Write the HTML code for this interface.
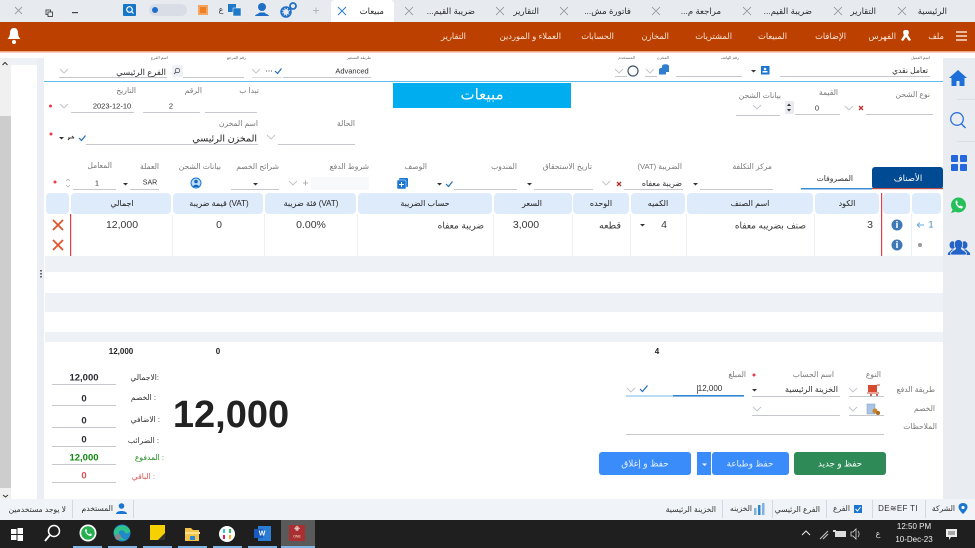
<!DOCTYPE html>
<html lang="ar"><head><meta charset="utf-8"><title>مبيعات</title>
<style>
html,body{margin:0;padding:0;width:975px;height:548px;overflow:hidden;background:#fff}
#w{position:relative;width:975px;height:548px;overflow:hidden;font-family:"Liberation Sans","DejaVu Sans",sans-serif;filter:blur(.35px)}
svg{position:absolute;left:0;top:0}
.r,.c{position:absolute;white-space:nowrap;line-height:1;font-size:8px;color:#333;z-index:2}
.r{transform:translate(-100%,-50%);direction:rtl}
.c{transform:translate(-50%,-50%)}
.tab{font-size:8.500px;color:#2b2b2b}
.m{font-size:8.300px;color:#fbe6da}
.l{font-size:7.600px;color:#777}
.h{font-size:8px;color:#222}
.tiny{font-size:4px;color:#666}
.v{font-size:9.500px;font-weight:bold;color:#2b2b33;font-family:"Liberation Sans",sans-serif}
.d{font-size:10.500px;color:#3a3a3a}
.s{font-size:7.600px;color:#2f2f2f}
.w{color:#fff}
</style></head><body><div id="w">
<svg width="975" height="548" viewBox="0 0 975 548" xmlns="http://www.w3.org/2000/svg" fill="none">
<!-- backgrounds -->
<rect width="975" height="22" fill="#e7eaef"/>
<path d="M331 22v-18a4 4 0 0 1 4-4h55a4 4 0 0 1 4 4v18z" fill="#fff"/>
<rect y="22" width="975" height="29" fill="#bc4000"/>
<rect y="51" width="975" height="1.500" fill="#f0a584"/>
<rect x="0" y="58" width="11" height="441" fill="#f0f0f0"/>
<rect x="0" y="116" width="11" height="372" fill="#cdcdcd"/>
<rect x="11" y="58" width="26" height="441" fill="#fff"/>
<rect x="11" y="58" width="26" height="7" fill="#eef1f6"/>
<rect x="37" y="58" width="7" height="441" fill="#ebeff5"/>
<rect x="943" y="58" width="32" height="441" fill="#e9edf2"/>
<rect x="44" y="81" width="899" height="1" fill="#63bdec"/>
<rect x="393" y="83" width="178" height="25" fill="#00aeef"/>

<!-- tabs -->
<rect x="872" y="167" width="71" height="22" rx="3" fill="#004a94"/>
<rect x="872" y="188" width="71" height="1.200" fill="#c0504d"/>
<rect x="801" y="188" width="71" height="1.500" fill="#3a8fd6"/>

<!-- grid header -->
<g fill="#deebfb">
<rect x="46" y="193" width="23" height="21" rx="4"/>
<rect x="71" y="193" width="100" height="21" rx="4"/>
<rect x="173" y="193" width="90" height="21" rx="4"/>
<rect x="265" y="193" width="91" height="21" rx="4"/>
<rect x="358" y="193" width="134" height="21" rx="4"/>
<rect x="494" y="193" width="78" height="21" rx="4"/>
<rect x="573" y="193" width="56" height="21" rx="4"/>
<rect x="631" y="193" width="54" height="21" rx="4"/>
<rect x="687" y="193" width="126" height="21" rx="4"/>
<rect x="815" y="193" width="64" height="21" rx="4"/>
<rect x="883" y="193" width="27" height="21" rx="4"/>
<rect x="912" y="193" width="29" height="21" rx="4"/>
</g>
<g fill="#eef1f6">
<rect x="172" y="214" width="1" height="42"/><rect x="264" y="214" width="1" height="42"/><rect x="357" y="214" width="1" height="42"/><rect x="493" y="214" width="1" height="42"/><rect x="572" y="214" width="1" height="42"/><rect x="630" y="214" width="1" height="42"/><rect x="686" y="214" width="1" height="42"/><rect x="814" y="214" width="1" height="42"/><rect x="911" y="214" width="1" height="42"/>
<rect x="45" y="256" width="898" height="16"/><rect x="45" y="293" width="898" height="19"/><rect x="45" y="332" width="898" height="10"/>
</g>
<rect x="70" y="214" width="1.200" height="42" fill="#e0404a"/>
<rect x="881" y="193" width="1.200" height="63" fill="#e0404a"/>
<path d="M53 220l10 10M63 220l-10 10M53 240l10 10M63 240l-10 10" stroke="#e2552b" stroke-width="1.800"/>
<g fill="#3f78b5"><circle cx="897" cy="225" r="5.500"/><circle cx="897" cy="245" r="5.500"/></g>
<path d="M897 223v5M897 243v5" stroke="#fff" stroke-width="1.500"/><circle cx="897" cy="221.700" r=".8" fill="#fff"/><circle cx="897" cy="241.700" r=".8" fill="#fff"/>
<path d="M917 225h7M917 225l3-2.500M917 225l3 2.500" stroke="#6aa9dc" stroke-width="1"/>
<circle cx="920" cy="245" r="2" fill="#999"/>
<path d="M640 224h5l-2.500 2.500z" fill="#333"/>
<g fill="#666"><rect x="40" y="270" width="2" height="1.500"/><rect x="40" y="273" width="2" height="1.500"/><rect x="40" y="276" width="2" height="1.500"/></g>

<!-- underlines -->
<g fill="#c4c7cc">
<rect x="59" y="77" width="108" height="1"/><rect x="183" y="77" width="61" height="1"/><rect x="283" y="77" width="88" height="1"/><rect x="252" y="77" width="30" height=".6"/>
<rect x="780" y="76" width="150" height="1"/><rect x="676" y="76" width="66" height="1"/><rect x="645" y="76" width="12" height="1"/><rect x="615" y="76" width="12" height="1"/>
<rect x="71" y="112" width="63" height="1"/><rect x="143" y="112" width="57" height="1"/><rect x="205" y="112" width="52" height="1"/>
<rect x="866" y="114" width="67" height="1"/><rect x="795" y="114" width="45" height="1"/><rect x="736" y="115" width="44" height="1"/>
<rect x="86" y="144" width="172" height="1"/><rect x="278" y="144" width="77" height="1"/>
<rect x="700" y="189" width="73" height="1"/><rect x="624" y="189" width="59" height="1"/><rect x="534" y="189" width="59" height="1"/><rect x="454" y="189" width="63" height="1"/>
<rect x="231" y="189" width="48" height="1"/><rect x="130" y="189" width="29" height="1"/><rect x="73" y="189" width="43" height="1"/>
<rect x="52" y="384" width="64" height="1"/><rect x="52" y="405" width="64" height="1"/><rect x="52" y="427" width="64" height="1"/><rect x="52" y="446" width="64" height="1"/><rect x="52" y="464" width="64" height="1"/><rect x="52" y="482" width="64" height="1"/>
<rect x="849" y="396" width="35" height="1"/><rect x="752" y="396" width="88" height="1"/><rect x="849" y="415" width="35" height="1"/><rect x="752" y="415" width="88" height="1"/><rect x="626" y="434" width="258" height="1"/>
</g>
<rect x="311" y="177" width="58" height="13" fill="#f8f9fb"/>
<rect x="172" y="65" width="11" height="12" rx="2" fill="#eef1f6"/>
<rect x="785" y="101" width="9" height="13" rx="1" fill="#e9ebef"/>
<rect x="626" y="395.500" width="47" height="1" fill="#7ab8ea"/><rect x="673" y="395" width="71" height="1.600" fill="#2f86d2"/>
<rect x="697" y="385" width=".7" height="9" fill="#333"/>

<!-- chevrons -->
<g stroke="#bfc3c9" stroke-width=".9">
<path d="M60 69l4 4 4-4M252 69l4 4 4-4M615 69l4 4 4-4M646 69l4 4 4-4M60 104l4 4 4-4M845 106l4 4 4-4M753 105l4 4 4-4M267 135l4 4 4-4M602 181l4 4 4-4M289 181l4 4 4-4M849 388l4 4 4-4M627 388l4 4 4-4M849 407l4 4 4-4M753 407l4 4 4-4"/>
</g>
<!-- carets -->
<g fill="#333">
<path d="M751 70h5l-2.500 2.500zM59 137h5l-2.500 2.500zM693 183h5l-2.500 2.500zM527 183h5l-2.500 2.500zM437 183h5l-2.500 2.500zM253 183h5l-2.500 2.500zM123 183h5l-2.500 2.500zM752 389h5l-2.500 2.500z"/>
<path d="M787 106l2-2.500 2 2.500zM787 109l2 2.500 2-2.500z"/>
</g>
<path d="M66 181l2-2 2 2M66 185l2 2 2-2" stroke="#aaa" stroke-width=".7"/>
<!-- checks -->
<g stroke="#1f6fb5" stroke-width="1.200">
<path d="M275 71l2.500 2.500 4-5M79 138l2.500 2.500 4-5M446 184l2.500 2.500 4-5M640 389l2.500 2.500 5-6"/>
</g>
<path d="M266 71h1M268.500 71h1M271 71h1" stroke="#555" stroke-width="1"/>
<path d="M68 138h6M74 138l-2-2M68 140l2-2" stroke="#444" stroke-width="1"/>
<path d="M859 106l4 4M863 106l-4 4M617 182l4 4M621 182l-4 4" stroke="#b5302a" stroke-width="1.300"/>
<path d="M303 183h5M305.500 180.500v5" stroke="#b0b0b0" stroke-width="1"/>
<g fill="#ee3b4a"><circle cx="50.500" cy="106" r="1.500"/><circle cx="51" cy="134" r="1.500"/><circle cx="55" cy="182" r="1.500"/><circle cx="754" cy="375" r="1.500"/></g>

<!-- small field icons -->
<circle cx="177.500" cy="70.500" r="2.200" stroke="#555" stroke-width=".8"/><path d="M176 72l-2 2" stroke="#555" stroke-width=".9"/>
<rect x="761" y="66" width="8.500" height="8.500" fill="#1976d2"/><circle cx="765" cy="69" r="1.300" fill="#fff"/><rect x="762.500" y="71" width="5" height="1.500" fill="#fff"/>
<ellipse cx="665.500" cy="66" rx="3.500" ry="1.800" fill="#2f7fd0"/><rect x="662" y="66" width="7" height="6" fill="#2f7fd0"/>
<ellipse cx="662.500" cy="69.500" rx="3.500" ry="1.800" fill="#2f7fd0"/><rect x="659" y="69.500" width="7" height="5" fill="#2f7fd0"/>
<circle cx="633" cy="71" r="5" stroke="#44546a" stroke-width="1.200"/>
<rect x="399" y="178" width="9" height="9" rx="1" fill="#1976d2"/><rect x="397" y="180" width="9" height="9" rx="1" fill="#1976d2" stroke="#fff" stroke-width=".5"/><path d="M399 184.500h5M401.500 182v5" stroke="#fff" stroke-width="1"/>
<circle cx="196" cy="183" r="5" fill="#bcdcf8" stroke="#1976d2" stroke-width="1"/><circle cx="196" cy="181.500" r="1.800" fill="#1565c0"/><path d="M193 187c0-3 6-3 6 0z" fill="#1565c0"/>
<!-- payment icons -->
<path d="M868 385h9v7h-9z" fill="#d94a33"/><path d="M877 385h3M867 393h12" stroke="#d94a33" stroke-width="1"/><circle cx="871" cy="395" r="1" fill="#a33"/><circle cx="877" cy="395" r="1" fill="#a33"/>
<rect x="867" y="404" width="8" height="10" fill="#a9c4e4" stroke="#7e9cc0" stroke-width=".5"/><circle cx="875" cy="411" r="2.500" fill="#c8862d"/><circle cx="878" cy="413" r="2" fill="#a86a1c"/>

<!-- buttons -->
<rect x="794" y="452" width="92" height="23" rx="3" fill="#2e8b57"/>
<rect x="712" y="452" width="77" height="23" rx="3" fill="#3a8cfb"/>
<rect x="697" y="452" width="14" height="23" fill="#3a8cfb"/>
<path d="M702 463.500h5l-2.500 2.500z" fill="#fff"/>
<rect x="599" y="452" width="92" height="23" rx="3" fill="#3a8cfb"/>

<!-- status bar -->
<rect y="499" width="975" height="21" fill="#f0f3f8"/>
<g fill="#d5d9df"><rect x="72" y="500" width="1" height="18"/><rect x="133" y="500" width="1" height="18"/><rect x="772" y="500" width="1" height="18"/><rect x="872" y="500" width="1" height="18"/><rect x="925" y="500" width="1" height="18"/><rect x="826" y="500" width="1" height="18"/><rect x="722" y="500" width="1" height="18"/></g>
<path d="M963 503c-3 0-4.500 2-4.500 4 0 3 4.500 7 4.500 7s4.500-4 4.500-7c0-2-1.500-4-4.500-4z" fill="#1976d2"/><circle cx="963" cy="507.500" r="1.600" fill="#fff"/>
<rect x="854" y="505" width="8" height="8" fill="#1976d2"/><path d="M855.500 509l2 2 3-4" stroke="#fff" stroke-width="1"/>
<rect x="754" y="508" width="2.500" height="7" fill="#7fb2e0"/><rect x="758" y="505" width="2.500" height="10" fill="#2f86d2"/><rect x="762" y="503" width="2.500" height="12" fill="#7fb2e0"/>
<circle cx="121.500" cy="506" r="2.800" fill="#1976d2"/><path d="M116 514c0-4 11-4 11 0z" fill="#1976d2"/>
<path d="M3 495l2.500 2 2.500-2" stroke="#333" stroke-width="1"/>
<path d="M2.500 65l2.500-2.500 2.500 2.500" stroke="#333" stroke-width="1"/>

<!-- taskbar -->
<rect y="520" width="975" height="28" fill="#1f1f1f"/>
<rect x="281" y="520" width="34" height="28" fill="#5a5a5a"/>
<g fill="#7fb6e6"><rect x="73" y="546" width="29" height="2"/><rect x="108" y="546" width="29" height="2"/><rect x="143" y="546" width="29" height="2"/><rect x="178" y="546" width="29" height="2"/><rect x="213" y="546" width="29" height="2"/><rect x="248" y="546" width="29" height="2"/><rect x="281" y="546" width="34" height="2"/></g>
<g fill="#fff"><rect x="11" y="529" width="5.500" height="5"/><rect x="17.500" y="528" width="5.500" height="6"/><rect x="11" y="535" width="5.500" height="5"/><rect x="17.500" y="535" width="5.500" height="6"/></g>
<circle cx="54" cy="531" r="5.500" stroke="#fff" stroke-width="1.500"/><path d="M50 535l-5 6" stroke="#fff" stroke-width="1.800"/>
<circle cx="88" cy="533" r="8.500" fill="#fff"/><circle cx="88" cy="533" r="6.800" fill="#25b14f"/><path d="M85 530c0 3 3 6 6 6l1-1.500-2-1-1 .7c-1-.5-2-1.500-2.500-2.500l.7-1-1-2z" fill="#fff"/>
<circle cx="122" cy="533" r="8.500" fill="#1f89c9"/><path d="M114 531c2-6 12-8 16-1 1 3-3 4-5 3 0-3-5-4-6-1 0 3 3 7 7 8-6 1-13-3-12-9z" fill="#2fc28a"/><circle cx="118" cy="537" r="3" fill="#888"/>
<rect x="150" y="525" width="15" height="15" fill="#f7d000"/><path d="M165 533v7h-7z" fill="#333"/>
<path d="M185 528h6l2 2h6v11h-14z" fill="#f3c44a"/><rect x="185" y="532" width="15" height="2" fill="#fbe08a"/><rect x="190" y="536" width="5" height="4" fill="#2f86d2"/>
<circle cx="227" cy="534" r="8" fill="#fff"/><g stroke-width="2"><path d="M224 529v4" stroke="#36c5f0"/><path d="M230 529v4" stroke="#2eb67d"/><path d="M224 535v4" stroke="#e01e5a"/><path d="M230 535v4" stroke="#ecb22e"/></g>
<rect x="258" y="526" width="13" height="15" fill="#2b7cd3"/><rect x="254" y="529" width="9" height="9" fill="#185abd"/>
<rect x="289" y="525" width="16" height="16" fill="#a92f33"/>
<!-- tray -->
<path d="M802 535l4-4 4 4" stroke="#eee" stroke-width="1"/>
<path d="M820 539l8-8M823 539l5-5" stroke="#bbb" stroke-width="1.200"/>
<rect x="835" y="531" width="11" height="6" fill="#ddd"/><rect x="833" y="530" width="3" height="2" fill="#ddd"/>
<path d="M851 532h2l3-3v10l-3-3h-2z" stroke="#ddd" stroke-width=".8"/><path d="M858 531c1.500 2 1.500 4 0 6" stroke="#ccc" stroke-width=".8"/>
<path d="M946 529h11v8h-6l-2 3v-3h-3z" fill="#eee"/><path d="M948 532h7M948 534h7" stroke="#333" stroke-width=".7"/>

<!-- sidebar icons -->
<path d="M958 70l-9 8h2.500v8h5v-5h3v5h5v-8h2.500z" fill="#1f6fd8"/>
<rect x="957" y="99" width="18" height=".8" fill="#d8dce2"/>
<circle cx="957" cy="119" r="6.300" stroke="#2d72d9" stroke-width="1.300"/><path d="M961.500 124l4 4" stroke="#2d72d9" stroke-width="1.500"/>
<rect x="957" y="141" width="18" height=".8" fill="#d8dce2"/>
<g fill="#2568dd"><rect x="951" y="155" width="7" height="7" rx="1"/><rect x="960" y="155" width="7" height="7" rx="1"/><rect x="951" y="164" width="7" height="7" rx="1"/><rect x="960" y="164" width="7" height="7" rx="1"/></g>
<circle cx="958.500" cy="205" r="7.500" fill="#25c05a"/><path d="M951 213l2-4 2 3z" fill="#25c05a"/><path d="M955.500 201.500c0 4 3 7 6.500 7l1.200-1.800-2.400-1.200-1 .8c-1.200-.6-2.200-1.700-2.800-2.800l.9-1-1.200-2.400z" fill="#fff"/>
<!-- people -->
<g fill="#2463c8">
<ellipse cx="952.500" cy="245" rx="3" ry="3.800"/><path d="M949 255c-1 0-1.500-.5-1-1.500.5-2 3-2.500 3.500-4h2.500l3 5.500z"/>
<ellipse cx="964.500" cy="245" rx="3" ry="3.800"/><path d="M969 255c1 0 1.500-.5 1-1.500-.5-2-3-2.500-3.500-4h-2.500l-3 5.500z"/>
</g>
<path d="M958.500 239.500c-2.800 0-4.200 2.200-4.200 4.800 0 1.800.6 3.200 1.400 4.200-.3 1.300-3.800 2-4.900 4-.6 1.200-.2 2.500 1 2.500h13.400c1.200 0 1.600-1.300 1-2.500-1.100-2-4.600-2.700-4.900-4 .8-1 1.400-2.400 1.400-4.200 0-2.600-1.400-4.800-4.200-4.800z" fill="#2463c8" stroke="#e9edf2" stroke-width=".8"/>

<!-- top-bar icons -->
<path d="M15 7l7 7M22 7l-7 7" stroke="#9a9ea5" stroke-width=".9"/>
<rect x="46" y="10" width="4.500" height="4.500" stroke="#444" stroke-width=".9"/><rect x="48" y="12" width="4.500" height="4.500" fill="#e7eaef" stroke="#444" stroke-width=".9"/>
<rect x="72" y="12" width="6" height="1.200" fill="#444"/>
<rect x="123" y="4" width="13" height="12" rx="1" fill="#1676c8"/><circle cx="129.500" cy="9.500" r="2.800" stroke="#fff" stroke-width="1.200"/><path d="M131.500 11.500l2 2" stroke="#fff" stroke-width="1.200"/>
<rect x="149" y="4" width="38" height="12" rx="6" fill="#d9dee6"/><circle cx="155" cy="10" r="3" fill="#1f6fd0"/>
<rect x="198" y="5" width="10" height="10" fill="#f4a460"/><rect x="200" y="7" width="6" height="6" fill="#ee7f22"/>
<rect x="228" y="4" width="8" height="8" fill="#1f78c8"/><rect x="233" y="8" width="8" height="8" fill="#1f78c8" stroke="#fff" stroke-width=".5"/>
<circle cx="262" cy="7" r="4" fill="#1f6fc8"/><path d="M255 16c0-1.500 3.500-2 4.500-3.500h5c1 1.500 4.500 2 4.500 3.500z" fill="#1f6fc8"/>
<circle cx="286" cy="12" r="4" stroke="#1f6fc8" stroke-width="2.500" stroke-dasharray="2 1"/><circle cx="286" cy="12" r="5" stroke="#1f6fc8" stroke-width="1.500"/><circle cx="293" cy="6" r="3" stroke="#1f6fc8" stroke-width="1.800"/>
<path d="M313 10.500h6M316 7.500v6" stroke="#aaa" stroke-width=".8"/>
<path d="M338 7l8 8M346 7l-8 8" stroke="#2d7fc8" stroke-width="1"/>
<g stroke="#8a8e95" stroke-width=".8">
<path d="M405 7l8 8M413 7l-8 8M496 7l8 8M504 7l-8 8M560 7l8 8M568 7l-8 8M652 7l8 8M660 7l-8 8M743 7l8 8M751 7l-8 8M834 7l8 8M842 7l-8 8M898 7l8 8M906 7l-8 8"/>
</g>
<!-- menu icons -->
<path d="M956 32h11M956 36h11M956 40h11" stroke="#fff" stroke-width="1.200"/>
<path d="M905 30c-2 0-2.500 3-1 5l-3 5 2 1 3-4 3 4 2-1-3-5c1.500-2 1-5-1-5z" fill="#fff"/>
<path d="M14 28c-3 0-4 2.500-4 5 0 3-1.500 5-2.500 6h13c-1-1-2.500-3-2.500-6 0-2.500-1-5-4-5z" fill="#fff"/><circle cx="14" cy="42" r="2" fill="#fff"/>
</svg>

<!-- tabs text -->
<span class="r tab" style="left:947px;top:11px">الرئيسية</span>
<span class="r tab" style="left:876px;top:11px">التقارير</span>
<span class="r tab" style="left:812px;top:11px">ضريبة القيم...</span>
<span class="r tab" style="left:721px;top:11px">مراجعة م...</span>
<span class="r tab" style="left:631px;top:11px">فاتورة مش...</span>
<span class="r tab" style="left:539px;top:11px">التقارير</span>
<span class="r tab" style="left:475px;top:11px">ضريبة القيم...</span>
<span class="r tab" style="left:384px;top:11px">مبيعات</span>
<span class="c" style="left:221px;top:10px;font-size:8px">ع</span>

<!-- menu -->
<span class="r m" style="left:944px;top:36px">ملف</span>
<span class="r m" style="left:896px;top:36px">الفهرس</span>
<span class="r m" style="left:846px;top:36px">الإضافات</span>
<span class="r m" style="left:787px;top:36px">المبيعات</span>
<span class="r m" style="left:732px;top:36px">المشتريات</span>
<span class="r m" style="left:669px;top:36px">المخازن</span>
<span class="r m" style="left:614px;top:36px">الحسابات</span>
<span class="r m" style="left:561px;top:36px">العملاء و الموردين</span>
<span class="r m" style="left:466px;top:36px">التقارير</span>

<!-- row 1 -->
<span class="r tiny" style="left:930px;top:58px">اسم العميل</span>
<span class="r tiny" style="left:739px;top:58px">رقم الهاتف</span>
<span class="r tiny" style="left:669px;top:58px">المخزن</span>
<span class="r tiny" style="left:635px;top:58px">المستخدم</span>
<span class="r tiny" style="left:371px;top:58px">طريقة التسعير</span>
<span class="r tiny" style="left:246px;top:58px">رقم المرجع</span>
<span class="r tiny" style="left:168px;top:58px">اسم الفرع</span>
<span class="r s" style="left:928px;top:71px">تعامل نقدي</span>
<span class="c s" style="left:352px;top:71px;font-size:7.500px">Advanced</span>
<span class="r s" style="left:166px;top:72px;font-size:8.400px">الفرع الرئيسي</span>

<!-- row 2 -->
<span class="r l" style="left:136px;top:91px">التاريخ</span>
<span class="r l" style="left:202px;top:91px">الرقم</span>
<span class="r l" style="left:259px;top:91px">تبدا ب</span>
<span class="c s" style="left:112px;top:106px;font-size:7.500px">2023-12-10</span>
<span class="c s" style="left:171px;top:106px;font-size:7.500px">2</span>
<span class="c w" style="left:482px;top:95px;font-size:15px">مبيعات</span>
<span class="r l" style="left:930px;top:95px">نوع الشحن</span>
<span class="r l" style="left:838px;top:93px">القيمة</span>
<span class="r l" style="left:781px;top:96px">بيانات الشحن</span>
<span class="c s" style="left:817px;top:108px;font-size:7.500px">0</span>

<!-- row 3 -->
<span class="r l" style="left:355px;top:124px">الحالة</span>
<span class="r l" style="left:258px;top:124px">اسم المخزن</span>
<span class="r s" style="left:257px;top:139px;font-size:9.500px;color:#222">المخزن الرئيسي</span>

<!-- row 4 -->
<span class="r l" style="left:772px;top:167px">مركز التكلفة</span>
<span class="r l" style="left:682px;top:167px">الضريبة (VAT)</span>
<span class="r l" style="left:592px;top:167px">تاريخ الاستحقاق</span>
<span class="r l" style="left:517px;top:167px">المندوب</span>
<span class="r l" style="left:427px;top:167px">الوصف</span>
<span class="r l" style="left:369px;top:167px">شروط الدفع</span>
<span class="r l" style="left:279px;top:167px">شرائح الخصم</span>
<span class="r l" style="left:221px;top:167px">بيانات الشحن</span>
<span class="r l" style="left:159px;top:167px">العملة</span>
<span class="r l" style="left:112px;top:166px">المعامل</span>
<span class="r s" style="left:682px;top:184px;font-size:7.800px">ضريبة معفاه</span>
<span class="c s" style="left:150px;top:183px;font-size:7px">SAR</span>
<span class="c s" style="left:97px;top:183px;font-size:7.500px">1</span>
<span class="c w" style="left:908px;top:178px;font-size:8.500px">الأصناف</span>
<span class="r s" style="left:853px;top:179px">المصروفات</span>

<!-- grid header -->
<span class="c h" style="left:122px;top:204px">اجمالي</span>
<span class="c h" style="left:219px;top:204px">قيمة ضريبة (VAT)</span>
<span class="c h" style="left:311px;top:204px">فئة ضريبة (VAT)</span>
<span class="c h" style="left:425px;top:204px">حساب الضريبة</span>
<span class="c h" style="left:532px;top:204px">السعر</span>
<span class="c h" style="left:601px;top:204px">الوحده</span>
<span class="c h" style="left:658px;top:204px">الكميه</span>
<span class="c h" style="left:750px;top:204px">اسم الصنف</span>
<span class="c h" style="left:847px;top:204px">الكود</span>

<!-- grid row -->
<span class="c d" style="left:122px;top:225px">12,000</span>
<span class="c d" style="left:219px;top:225px">0</span>
<span class="c d" style="left:311px;top:225px">0.00%</span>
<span class="r d" style="left:484px;top:226px;font-size:9px">ضريبة معفاه</span>
<span class="c d" style="left:526px;top:225px">3,000</span>
<span class="r d" style="left:621px;top:226px;font-size:9.500px">قطعه</span>
<span class="c d" style="left:664px;top:225px">4</span>
<span class="r d" style="left:806px;top:226px;font-size:9px">صنف بضريبه معفاه</span>
<span class="c d" style="left:870px;top:225px">3</span>
<span class="c" style="left:931px;top:225px;font-size:9px;color:#3f86c5">1</span>

<!-- footer totals -->
<span class="c" style="left:121px;top:352px;font-size:8px;font-weight:bold;color:#222">12,000</span>
<span class="c" style="left:218px;top:352px;font-size:8px;font-weight:bold;color:#222">0</span>
<span class="c" style="left:657px;top:352px;font-size:8px;font-weight:bold;color:#222">4</span>

<span class="r s" style="left:159px;top:378px">:الاجمالي</span>
<span class="r s" style="left:156px;top:398px">: الخصم</span>
<span class="r s" style="left:160px;top:420px">: الاضافي</span>
<span class="r s" style="left:159px;top:441px">: الضرائب</span>
<span class="r s" style="left:164px;top:458px;color:#1f8f1f">: المدفوع</span>
<span class="r s" style="left:155px;top:477px;color:#d9534f">: الباقي</span>
<span class="c v" style="left:84px;top:378px">12,000</span>
<span class="c v" style="left:84px;top:399px">0</span>
<span class="c v" style="left:84px;top:421px">0</span>
<span class="c v" style="left:84px;top:440px">0</span>
<span class="c v" style="left:84px;top:458px;color:#108a10">12,000</span>
<span class="c v" style="left:84px;top:476px;color:#d9505a">0</span>
<span class="c" style="left:231px;top:415px;font-size:38px;font-weight:bold;color:#222">12,000</span>

<!-- payment -->
<span class="r l" style="left:881px;top:375px">النوع</span>
<span class="r l" style="left:834px;top:375px">اسم الحساب</span>
<span class="r l" style="left:746px;top:375px">المبلغ</span>
<span class="r l" style="left:935px;top:390px">طريقة الدفع</span>
<span class="r l" style="left:935px;top:409px">الخصم</span>
<span class="r l" style="left:937px;top:427px">الملاحظات</span>
<span class="r s" style="left:838px;top:390px;font-size:8px">الخزينة الرئيسية</span>
<span class="c s" style="left:710px;top:389px;font-size:8px">12,000</span>

<!-- buttons -->
<span class="c w" style="left:840px;top:464px;font-size:8.700px">حفظ و جديد</span>
<span class="c w" style="left:750px;top:464px;font-size:8.700px;color:#e8f1ff">حفظ وطباعة</span>
<span class="c w" style="left:645px;top:464px;font-size:9px;color:#e8f1ff">حفظ و إغلاق</span>

<!-- status -->
<span class="r s" style="left:955px;top:509px">الشركة</span>
<span class="c s" style="left:898px;top:509px;font-size:8px;letter-spacing:.3px">DE≋EF TI</span>
<span class="r s" style="left:850px;top:509px">الفرع</span>
<span class="r s" style="left:820px;top:510px">الفرع الرئيسي</span>
<span class="r s" style="left:752px;top:509px">الخزينه</span>
<span class="r s" style="left:716px;top:510px">الخزينة الرئيسية</span>
<span class="r s" style="left:113px;top:509px">المستخدم</span>
<span class="r s" style="left:66px;top:510px">لا يوجد مستخدمين</span>

<!-- taskbar text -->
<span class="c w" style="left:297px;top:530px;font-size:6px;font-weight:bold">※</span>
<span class="c" style="left:297px;top:537px;font-size:3.500px;color:#eec">ONE</span>
<span class="c w" style="left:262px;top:534px;font-size:7px;font-weight:bold">W</span>
<span class="c" style="left:878px;top:534px;font-size:8px;color:#ddd">ع</span>
<span class="c" style="left:914px;top:527px;font-size:8px;color:#eee">12:50 PM</span>
<span class="c" style="left:914px;top:540px;font-size:8px;color:#eee">10-Dec-23</span>
</div></body></html>
